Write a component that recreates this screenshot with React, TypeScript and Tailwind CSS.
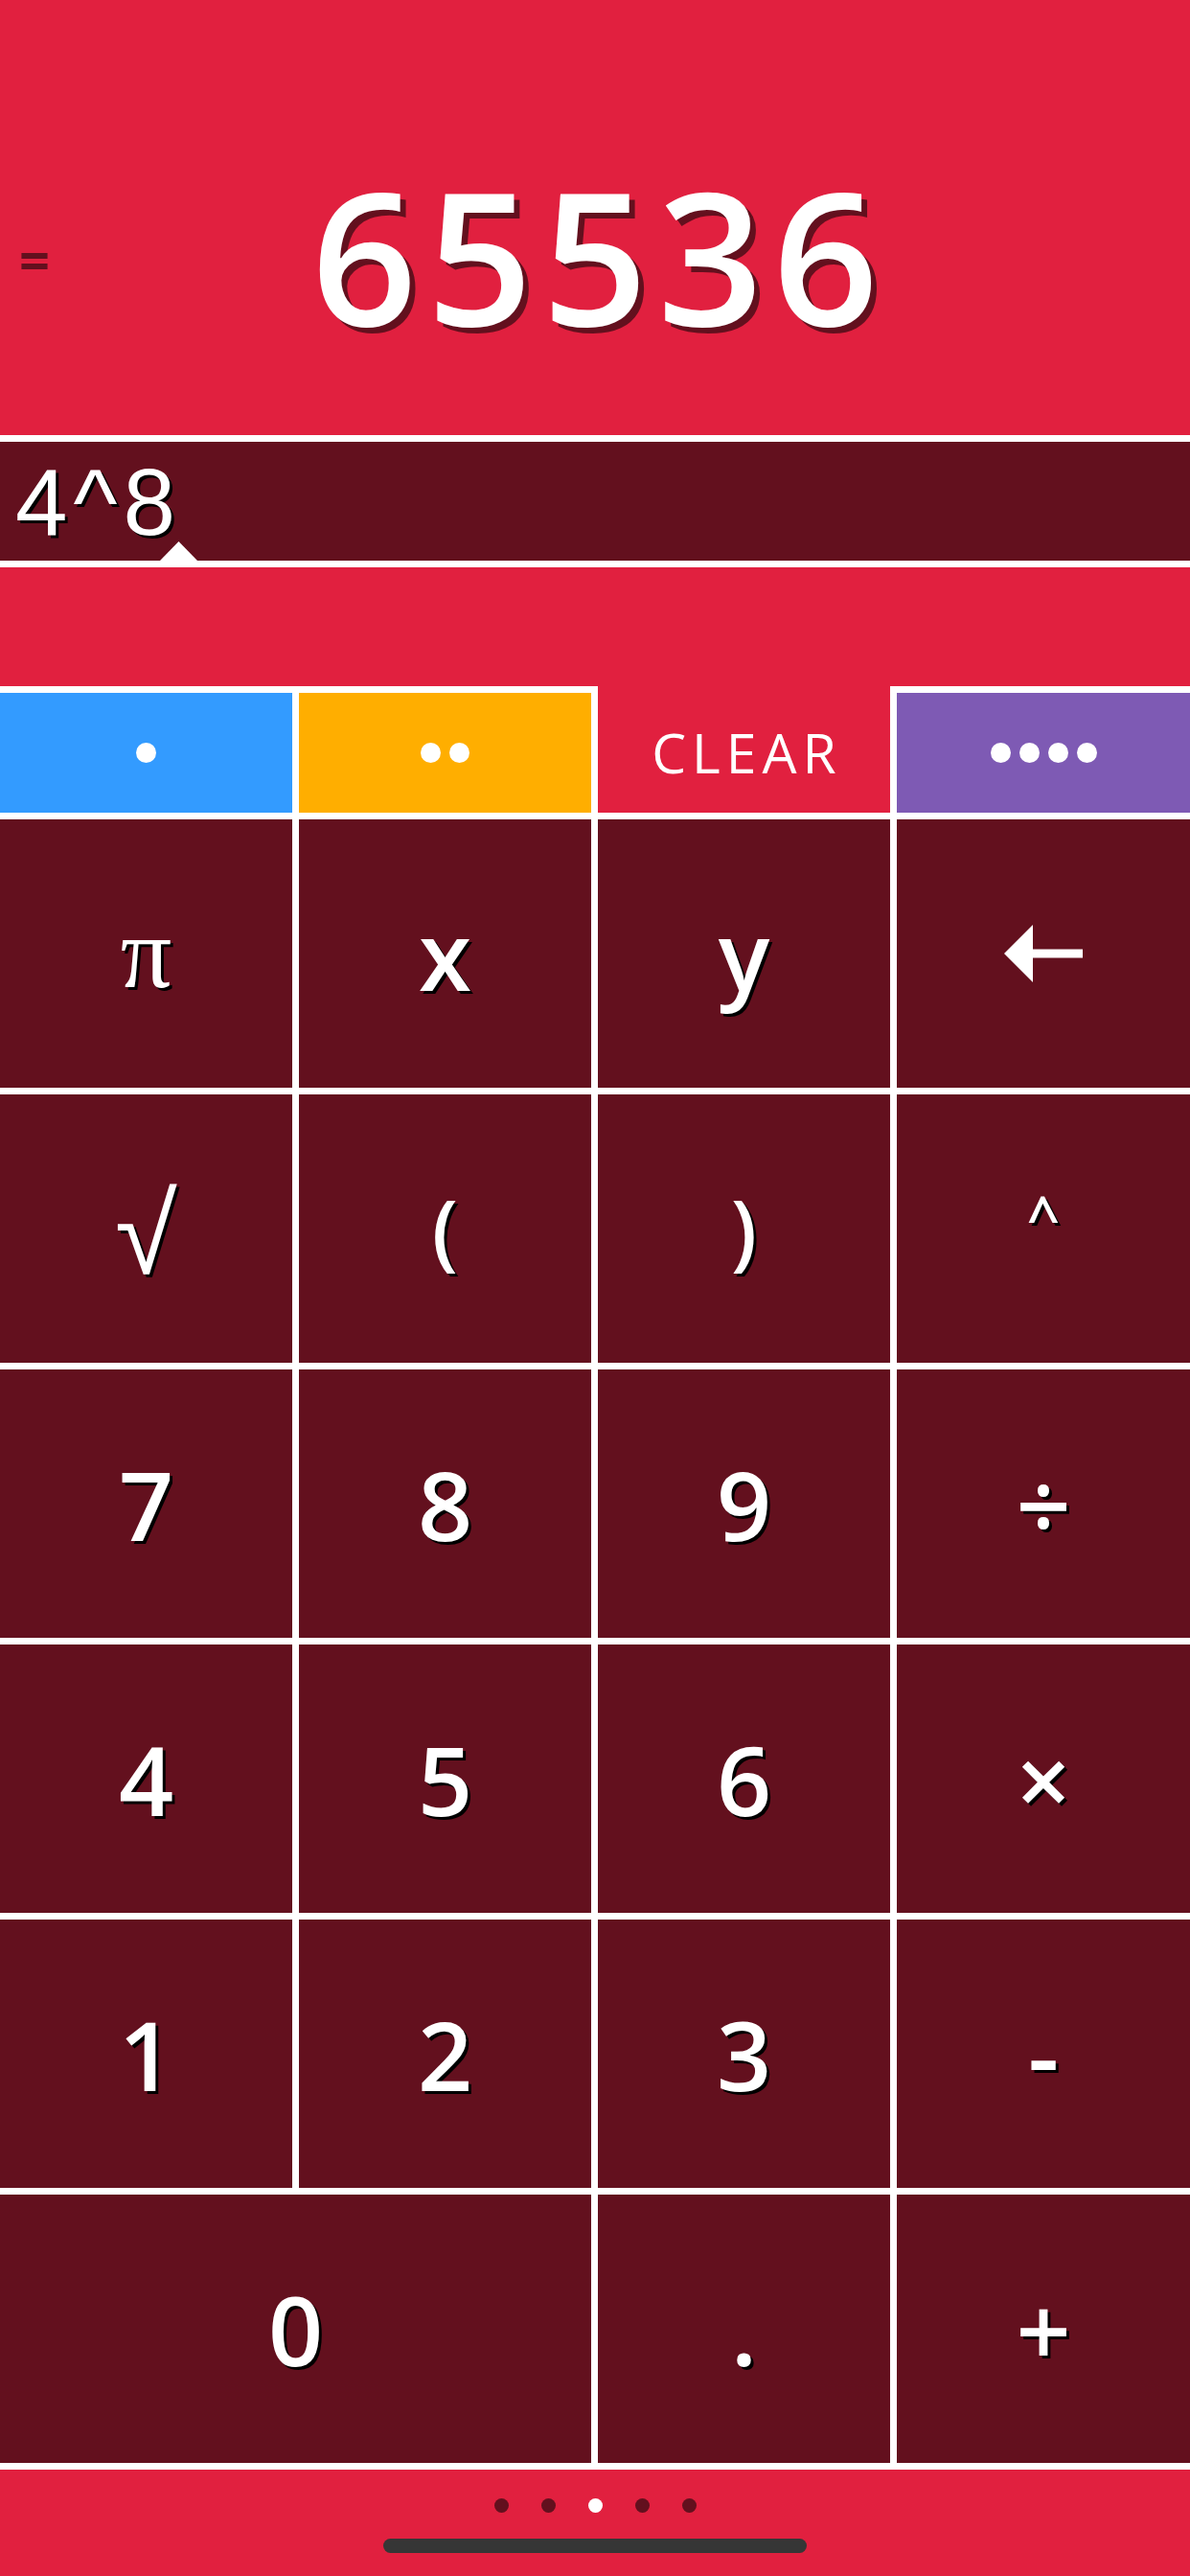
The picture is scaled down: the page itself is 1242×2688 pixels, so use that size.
import React from "react";

type Key = { label: React.ReactNode; span?: boolean; kind?: string };

const SHADOW = "[text-shadow:3px_3px_0_#000]";

function KeyCell({ k }: { k: Key }) {
  let content: React.ReactNode = null;
  if (k.kind === "arrow") {
    content = (
      <svg width="82" height="60" viewBox="0 0 82 60">
        <polygon points="0,30 30,0 30,60" fill="#fff" />
        <rect x="29" y="25.5" width="53" height="9" fill="#fff" />
      </svg>
    );
  } else if (k.kind === "pi") {
    content = (
      <span className={`[font-family:'Liberation_Serif',serif] text-[106px] leading-none ${SHADOW}`}>π</span>
    );
  } else if (k.kind === "sqrt") {
    content = (
      <span className={`[font-family:'Liberation_Sans',sans-serif] text-[118px] leading-none pt-[12px] ${SHADOW}`}>√</span>
    );
  } else if (k.kind === "paren") {
    content = <span className={`text-[86px] leading-none font-semibold ${SHADOW}`}>{k.label}</span>;
  } else if (k.kind === "caret") {
    content = <span className={`text-[60px] leading-none font-semibold pb-[26px] ${SHADOW}`}>^</span>;
  } else {
    content = <span className={`text-[100px] leading-none font-semibold ${SHADOW}`}>{k.label}</span>;
  }
  return (
    <div
      className={`bg-[#63101e] text-white flex items-center justify-center ${k.span ? "col-span-2" : ""}`}
    >
      {content}
    </div>
  );
}

const keys: Key[] = [
  { label: "π", kind: "pi" },
  { label: "x" },
  { label: "y" },
  { label: "", kind: "arrow" },
  { label: "√", kind: "sqrt" },
  { label: "(", kind: "paren" },
  { label: ")", kind: "paren" },
  { label: "^", kind: "caret" },
  { label: "7" },
  { label: "8" },
  { label: "9" },
  { label: "÷" },
  { label: "4" },
  { label: "5" },
  { label: "6" },
  { label: "×" },
  { label: "1" },
  { label: "2" },
  { label: "3" },
  { label: "-" },
  { label: "0", span: true },
  { label: "." },
  { label: "+" },
];

function Dots({ n }: { n: number }) {
  return (
    <div className="flex gap-[9px]">
      {Array.from({ length: n }).map((_, i) => (
        <div key={i} className="w-[21px] h-[21px] rounded-full bg-white" />
      ))}
    </div>
  );
}

export default function App() {
  return (
    <div className="w-[1242px] h-[2688px] bg-[#e1203f] flex flex-col [font-family:'Open_Sans',sans-serif] overflow-hidden">
      {/* result */}
      <div className="h-[454px] pt-[76px] grid grid-cols-[60px_1fr_60px] items-center">
        <div className="pl-[20px] mt-[10px] text-[56px] leading-none font-bold text-[#63101e]">=</div>
        <div className="text-center text-white text-[193px] leading-none font-semibold tracking-[10px] pl-[10px] [text-shadow:6px_6px_0_#63101e]">
          65536
        </div>
        <div />
      </div>
      <div className="h-[7px] bg-white" />
      {/* expression */}
      <div className="relative h-[124px] bg-[#63101e] pt-[14px] pl-[16px]">
        <div className="[font-family:'Liberation_Sans',sans-serif] text-white text-[98px] leading-none tracking-[6px] [text-shadow:3px_3px_0_#000]">
          4^8
        </div>
        <svg className="absolute left-[167px] bottom-0" width="39" height="20" viewBox="0 0 39 20">
          <polygon points="0,20 19.5,0 39,20" fill="#fff" />
        </svg>
      </div>
      <div className="h-[7px] bg-white" />
      <div className="h-[124px]" />
      {/* pads */}
      <div className="bg-white flex flex-col gap-[7px] pb-[7px]">
        <div className="grid grid-cols-[305px_305px_305px_306px] gap-x-[7px] h-[132px]">
          <div className="mt-[7px] bg-[#339bff] flex items-center justify-center">
            <Dots n={1} />
          </div>
          <div className="mt-[7px] bg-[#ffae00] flex items-center justify-center">
            <Dots n={2} />
          </div>
          <div className="bg-[#e1203f] pt-[7px] flex items-center justify-center">
            <span className="text-white text-[57px] leading-none font-medium tracking-[6px] pl-[6px]">CLEAR</span>
          </div>
          <div className="mt-[7px] bg-[#7e5ab4] flex items-center justify-center">
            <Dots n={4} />
          </div>
        </div>
        <div className="grid grid-cols-[305px_305px_305px_306px] gap-[7px] auto-rows-[280px]">
          {keys.map((k, i) => (
            <KeyCell key={i} k={k} />
          ))}
        </div>
      </div>
      {/* bottom */}
      <div className="flex-1 flex flex-col items-center pt-[30px]">
        <div className="flex gap-[34px]">
          {[0, 1, 2, 3, 4].map((i) => (
            <div
              key={i}
              className={`w-[15px] h-[15px] rounded-full ${i === 2 ? "bg-white" : "bg-[#63101e]"}`}
            />
          ))}
        </div>
        <div className="mt-[27px] w-[442px] h-[15px] rounded-full bg-[#363636]" />
      </div>
    </div>
  );
}
